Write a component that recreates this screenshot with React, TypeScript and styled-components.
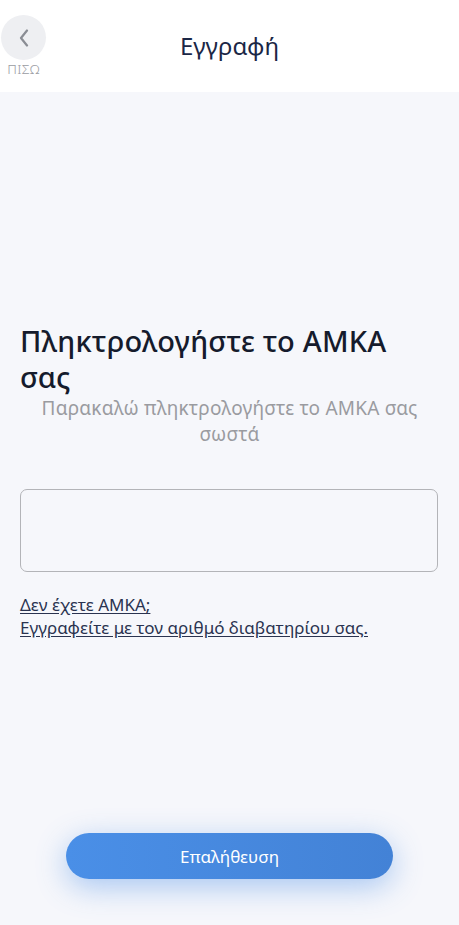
import React from "react";
import styled, { createGlobalStyle } from "styled-components";

const Global = createGlobalStyle`
  html, body { margin: 0; padding: 0; }
  body { background: #f6f7fb; font-family: "Noto Sans", "DejaVu Sans", sans-serif; }
  * { box-sizing: border-box; }
`;

const Page = styled.div`
  width: 459px;
  height: 925px;
  display: flex;
  flex-direction: column;
  background: #f6f7fb;
`;

const Header = styled.header`
  height: 92px;
  background: #ffffff;
  display: grid;
  grid-template-columns: 60px 1fr 60px;
  align-items: start;
`;

const BackWrap = styled.div`
  display: flex;
  flex-direction: column;
  align-items: center;
  padding-top: 15px;
  width: 47px;
`;

const BackCircle = styled.button`
  width: 45px;
  height: 45px;
  border-radius: 50%;
  border: none;
  background: #eeeff2;
  display: flex;
  align-items: center;
  justify-content: center;
  padding: 0;
`;

const BackLabel = styled.span`
  font-size: 13.5px;
  font-weight: 300;
  color: #9a9ca2;
  letter-spacing: 0.4px;
  margin-top: 1px;
  line-height: 16px;
`;

const Title = styled.h1`
  margin: 0;
  padding-top: 30px;
  text-align: center;
  font-weight: 400;
  font-size: 24px;
  line-height: 32px;
  color: #1b2746;
`;

const Body = styled.main`
  flex: 1;
  display: flex;
  flex-direction: column;
  padding: 0 20px;
`;

const Heading = styled.h2`
  margin: 231px 0 0;
  font-weight: 500;
  font-size: 29px;
  letter-spacing: 0.2px;
  line-height: 36px;
  color: #151b2c;
`;

const Sub = styled.p`
  margin: 0;
  text-align: center;
  font-size: 19px;
  letter-spacing: 0.2px;
  line-height: 26px;
  color: #9a9ba0;
`;

const Input = styled.input`
  margin-top: 42px;
  width: 418px;
  height: 83px;
  border: 1.5px solid #b3b4b8;
  border-radius: 7px;
  background: transparent;
  outline: none;
`;

const Links = styled.div`
  margin-top: 21px;
  display: flex;
  flex-direction: column;
  align-items: flex-start;
`;

const Link = styled.a`
  font-size: 17px;
  line-height: 23px;
  color: #2a3350;
  text-decoration: underline;
  text-underline-offset: 2px;
  cursor: pointer;
`;

const Footer = styled.div`
  margin-top: auto;
  padding-bottom: 46px;
  display: flex;
  justify-content: center;
`;

const Primary = styled.button`
  width: 327px;
  height: 46px;
  border: none;
  border-radius: 23px;
  background: linear-gradient(90deg, #4a8fe7 0%, #4382d6 100%);
  color: #ffffff;
  font-family: inherit;
  font-size: 17px;
  box-shadow: 0 8px 30px rgba(74, 140, 230, 0.45);
`;

export default function App() {
  return (
    <>
      <Global />
      <Page>
        <Header>
          <BackWrap>
            <BackCircle aria-label="back">
              <svg width="14" height="18" viewBox="0 0 14 18" fill="none">
                <path d="M10 1.5 L4 9 L10 16.5" stroke="#8a8d94" strokeWidth="2.2" strokeLinecap="round" strokeLinejoin="round" />
              </svg>
            </BackCircle>
            <BackLabel>ΠΙΣΩ</BackLabel>
          </BackWrap>
          <Title>Εγγραφή</Title>
          <div />
        </Header>
        <Body>
          <Heading>Πληκτρολογήστε το ΑΜΚΑ σας</Heading>
          <Sub>Παρακαλώ πληκτρολογήστε το ΑΜΚΑ σας σωστά</Sub>
          <Input type="text" />
          <Links>
            <Link>Δεν έχετε ΑΜΚΑ;</Link>
            <Link>Εγγραφείτε με τον αριθμό διαβατηρίου σας.</Link>
          </Links>
        </Body>
        <Footer>
          <Primary>Επαλήθευση</Primary>
        </Footer>
      </Page>
    </>
  );
}
